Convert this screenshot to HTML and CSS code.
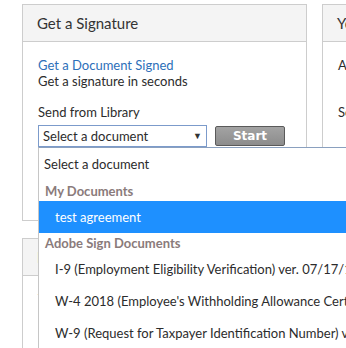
FILE: index.html
```html
<!DOCTYPE html>
<html lang="en">
<head>
    <meta charset="UTF-8">
    <title>Get a Signature</title>
    <link rel="stylesheet" href="styles.css">
</head>
<body>
    <div class="dashboard">
        <div class="row">
            <div class="panel sign-panel">
                <div class="panel-header">Get a Signature</div>
                <div class="panel-body">
                    <a class="doc-link" href="#">Get a Document Signed</a>
                    <div class="sub">Get a signature in seconds</div>
                    <div class="library-label">Send from Library</div>
                    <div class="library-row">
                        <div class="select-wrap">
                            <div class="select">
                                <span>Select a document</span>
                                <span class="arrow">&#9660;</span>
                            </div>
                            <!-- open dropdown list -->
                            <div class="dropdown">
                                <div class="option first">Select a document</div>
                                <div class="group">My Documents</div>
                                <div class="option sub-option selected">test agreement</div>
                                <div class="group">Adobe Sign Documents</div>
                                <div class="option sub-option">I-9 (Employment Eligibility Verification) ver. 07/17/17 N</div>
                                <div class="option sub-option">W-4 2018 (Employee's Withholding Allowance Certificate)</div>
                                <div class="option sub-option">W-9 (Request for Taxpayer Identification Number) ver. 11/2017</div>
                            </div>
                        </div>
                        <button class="start-btn">Start</button>
                    </div>
                </div>
            </div>
            <div class="panel side-panel">
                <div class="panel-header">Your Agreements</div>
                <div class="panel-body">
                    <div class="sub">Action required</div>
                    <div class="side-label">Sent for signature</div>
                </div>
            </div>
        </div>
        <div class="row">
            <div class="panel lower-panel">
                <div class="panel-header">Manage</div>
                <div class="panel-body">
                    <div class="sub">Templates</div>
                </div>
            </div>
        </div>
    </div>
</body>
</html>
```

FILE: styles.css
```css
body {
    margin: 0;
    font-family: Lato, "Open Sans", sans-serif;
    font-size: 13px;
    color: #2c2c2c;
    background-color: #fff;
    overflow: hidden;
}

.dashboard {
    padding: 4px 0 0 22px;
    width: 700px;
}

.row {
    display: flex;
    gap: 15px;
    margin-bottom: 17px;
}

.panel {
    border: 1px solid #cdcdcd;
    background-color: #fff;
}

.sign-panel {
    width: 283px;
    height: 215px;
}

.side-panel {
    width: 283px;
    height: 215px;
}

.lower-panel {
    width: 283px;
    height: 200px;
}

.panel-header {
    height: 36px;
    line-height: 36px;
    padding-left: 14px;
    font-size: 15px;
    color: #333;
    background-color: #f4f4f4;
    border-bottom: 1px solid #cdcdcd;
}

.panel-body {
    padding: 15px 15px 0 15px;
    line-height: 16px;
}

.doc-link {
    display: block;
    color: #2d6fb9;
    text-decoration: none;
}

.library-label {
    margin-top: 15px;
}

.side-label {
    margin-top: 31px;
}

.library-row {
    display: flex;
    align-items: center;
    margin-top: 5px;
}

.select-wrap {
    position: relative;
}

.select {
    width: 159px;
    height: 20px;
    padding: 0 4px;
    border: 1px solid #7c9bcb;
    display: flex;
    justify-content: space-between;
    align-items: center;
}

.arrow {
    font-size: 9px;
    color: #333;
    margin-right: 0;
}

.start-btn {
    margin-left: 8px;
    width: 70px;
    height: 20px;
    padding: 0;
    border: 1px solid #5a5a5a;
    border-radius: 2px;
    background: linear-gradient(#a3a3a3, #8c8c8c);
    color: #fff;
    font-family: "DejaVu Sans", sans-serif;
    font-size: 12px;
    font-weight: bold;
}

.dropdown {
    position: absolute;
    left: 0;
    top: 22px;
    width: 420px;
    background-color: #fff;
    border-top: 1px solid #8aa0bf;
    border-left: 1px solid #c6c6c6;
    z-index: 2;
}

.option {
    height: 32px;
    line-height: 32px;
    padding-left: 5px;
    color: #2c2c2c;
    white-space: nowrap;
}

.option.first {
    height: 33px;
    line-height: 33px;
}

.sub-option {
    padding-left: 16px;
}

.selected {
    background-color: #1e90ff;
    color: #fff;
}

.group {
    height: 20px;
    line-height: 20px;
    padding-left: 6px;
    font-weight: bold;
    color: #8a7b7b;
}
```
